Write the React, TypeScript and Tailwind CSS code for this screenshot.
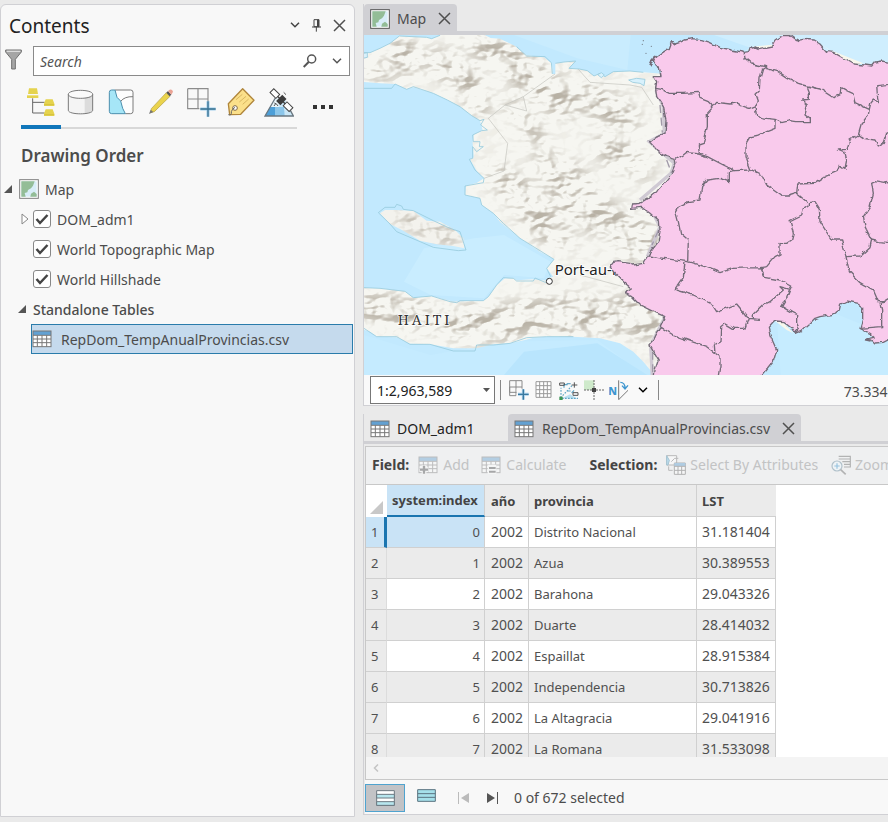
import React, { useState } from "react";

type Row = { index: number; year: number; province: string; lst: string };

const rows: Row[] = [
  { index: 0, year: 2002, province: "Distrito Nacional", lst: "31.181404" },
  { index: 1, year: 2002, province: "Azua", lst: "30.389553" },
  { index: 2, year: 2002, province: "Barahona", lst: "29.043326" },
  { index: 3, year: 2002, province: "Duarte", lst: "28.414032" },
  { index: 4, year: 2002, province: "Espaillat", lst: "28.915384" },
  { index: 5, year: 2002, province: "Independencia", lst: "30.713826" },
  { index: 6, year: 2002, province: "La Altagracia", lst: "29.041916" },
  { index: 7, year: 2002, province: "La Romana", lst: "31.533098" },
];

/* ---------- icons ---------- */

const Chevron = ({ className = "" }: { className?: string }) => (
  <svg viewBox="0 0 10 6" className={`w-[10px] h-[6px] ${className}`} fill="none" stroke="currentColor" strokeWidth="1.5">
    <path d="M1 0.8 5 4.8 9 0.8" />
  </svg>
);

const CloseX = () => (
  <svg viewBox="0 0 13 13" className="size-[13px]" fill="none" stroke="#505050" strokeWidth="1.5">
    <path d="M1 1 12 12M12 1 1 12" />
  </svg>
);

const MapIcon = ({ dark = false }: { dark?: boolean }) => (
  <svg viewBox="0 0 60 60" className="size-5 shrink-0">
    <rect x="2" y="2" width="56" height="56" fill="#fff" stroke={dark ? "#555" : "#808080"} strokeWidth="3" />
    <rect x="7" y="7" width="46" height="46" fill="#d8edf8" />
    <path d="M7 7H47L42 20 36 28 27 33 25 40 17 42 20 53H7Z" fill="#93bd97" />
    <path d="M34 53 36 44 45 38 53 45V53Z" fill="#93bd97" />
  </svg>
);

const TableIcon = ({ faded, children }: { faded?: boolean; children?: React.ReactNode }) => (
  <svg viewBox="0 0 60 54" className="w-5 h-[18px] shrink-0" opacity={faded ? 0.42 : 1}>
    <rect x="3" y="3" width="54" height="47" fill="#fff" />
    <rect x="3" y="3" width="54" height="12" fill="#63a1d2" />
    <path d="M3 16H57M3 27H57M3 38H57M16 16V50M30 16V50M44 16V50" stroke="#777" strokeWidth="3" />
    <rect x="3" y="3" width="54" height="47" fill="none" stroke="#777" strokeWidth="3" />
    {children}
  </svg>
);

const SearchIcon = () => (
  <svg viewBox="0 0 42 42" className="size-[14px]" fill="none" stroke="#555">
    <circle cx="26" cy="15" r="12" strokeWidth="4.5" />
    <path d="M17 24 2 39" strokeWidth="6" />
  </svg>
);

const contentsTools: { label: string; box: string; art: React.ReactNode }[] = [
  {
    label: "List By Drawing Order",
    box: "78 261 90 90",
    art: (
      <>
        <path d="M98 295V339H134M98 307H134" fill="none" stroke="#666" strokeWidth="3" />
        <g fill="#e5d34e">
          <path d="M87 265H111L114 282H84Z" />
          <path d="M81 286H115V294H81Z" />
          <path d="M137 298H158L163 311V318H132V311Z" />
          <path d="M137 328H158L163 341V348H132V341Z" />
        </g>
        <path d="M132 314H163M132 344H163" stroke="#cdb936" strokeWidth="2" />
      </>
    ),
  },
  {
    label: "List By Data Source",
    box: "198 261 90 90",
    art: (
      <>
        <path d="M205 284V331C205 345 278 345 278 331V284Z" fill="#f4f4f4" />
        <path d="M254 294 278 286V331Q274 339 254 341Z" fill="#dcdcdc" />
        <ellipse cx="241.500" cy="283" rx="36.500" ry="11.500" fill="#fafafa" />
        <path d="M205 283V331C205 345 278 345 278 331V283M205 283C205 299 278 299 278 283S205 267 205 283" fill="none" stroke="#7a7a7a" strokeWidth="3" />
      </>
    ),
  },
  {
    label: "List By Selection",
    box: "318 261 90 90",
    art: (
      <>
        <rect x="328" y="270" width="71" height="71" rx="7" fill="#fdfdfd" />
        <path d="M362 304Q374 289 399 290M345 270H392Q399 270 399 277V334Q399 341 392 341H376" fill="none" stroke="#7a7a7a" strokeWidth="3" />
        <path d="M335 270H345L351 292 362 303 368 325 376 341H335Q328 341 328 334V277Q328 270 335 270Z" fill="#a6e6f7" stroke="#4b8fae" strokeWidth="3" />
      </>
    ),
  },
  {
    label: "List By Editing",
    box: "438 261 90 90",
    art: (
      <>
        <path d="M454 326 499 278 510 289 463 335 452 338Z" fill="#ead34d" stroke="#b09a36" strokeWidth="2" />
        <path d="M499 278 504 273 514 284 509 289Z" fill="#555" />
        <path d="M504 273 509 269Q517 267 519 275L514 284Z" fill="#eaa294" />
        <path d="M452 329 447 342 460 336Z" fill="#777" />
      </>
    ),
  },
  {
    label: "List By Snapping",
    box: "558 261 90 90",
    art: (
      <>
        <path d="M563 266H624V326H563V266M594 266V326M563 297H624" fill="none" stroke="#8c8c8c" strokeWidth="3.500" />
        <path d="M598 304H630V330H598Z" fill="#f8f8f8" />
        <path d="M624 304V350M601 327H647" stroke="#9fcdeb" strokeWidth="9" />
        <path d="M624 304V350M601 327H647" stroke="#39708f" strokeWidth="4" />
      </>
    ),
  },
  {
    label: "List By Labeling",
    box: "678 261 90 90",
    art: (
      <>
        <path d="M728 266 762 301 722 343 689 344 685 311Z" fill="#fbe08a" stroke="#b0863c" strokeWidth="4" strokeLinejoin="round" />
        <circle cx="705" cy="324" r="7" fill="#fff" stroke="#806a4a" strokeWidth="3" />
        <path d="M685 344Q696 348 694 335 696 327 705 322" fill="none" stroke="#666" strokeWidth="3" />
        <path d="M708 299 727 283M718 306 738 289M728 313 746 297" stroke="#d3ae58" strokeWidth="2.500" />
      </>
    ),
  },
  {
    label: "List By Perspective Imagery",
    box: "798 261 90 90",
    art: (
      <>
        <path d="M832 294H858L886 348H801Z" fill="#cbe7f7" />
        <path d="M817 320H833V348H801Z" fill="#4d9fd8" />
        <path d="M832 294H842V321H817Z" fill="#e9f5fb" />
        <path d="M831 321H858L860 348H831Z" fill="#8cc6ea" />
        <path d="M832 294 801 348H886L877 331" fill="none" stroke="#6a7780" strokeWidth="4" />
        <g transform="rotate(45 850 300)">
          <rect x="810" y="292" width="25" height="16" fill="#fff" stroke="#444" strokeWidth="3" />
          <rect x="866" y="292" width="25" height="16" fill="#fff" stroke="#444" strokeWidth="3" />
          <path d="M835 300H866" stroke="#444" strokeWidth="4" />
          <rect x="841" y="287" width="18" height="26" fill="#3d3d3d" />
        </g>
        <path d="M833 311 828 318M857 277 864 284M829 309Q836 310 840 318" fill="none" stroke="#555" strokeWidth="3" />
      </>
    ),
  },
];

/* ---------- map drawing ---------- */

const haiti =
  "M0 157 30 158 60 145 90 130 118 108 200 112 215 116 240 106 300 95 370 103 392 114 420 116 465 138 500 166 552 172 575 190 579 222 586 222 586 190 612 186 647 183 627 205 658 207 682 212 702 228 720 220 735 230 760 215 810 213 850 217 950 225V1140H886L875 1115 850 1085 820 1055 780 1030 720 1015 640 1010 560 1010 520 1013 495 1020 450 1030 400 1033 350 1045 280 1045 210 1033 150 1031 110 1012 50 1010 30 995 0 985V863L60 865 135 874 160 893 215 888 280 905 330 902 370 902 385 890 410 855 435 835 460 835 470 841 520 838 560 842 568 834 580 830 560 805 582 778 540 755 480 715 420 665 400 640 365 615 360 595 315 585 318 557 350 549 372 535 350 513 330 478 341 472 338 428 341 404 368 390 360 362 335 347 300 320 262 300 220 280 160 262 140 268 105 252 60 250 0 245Z";
const gonave =
  "M60 640 75 630 105 630 160 632 200 662 240 665 285 690 310 715 313 745 280 738 230 733 180 722 130 692 90 672Z";
const shoreline =
  "M0 157 30 158 60 145 90 130 118 108 200 112 215 116 240 106M470 140 500 168 555 170 574 188 577 222M586 190 612 186 647 183 627 205 658 207 682 212 702 228 720 220 735 230 760 215 810 213 850 217M12 265H95L105 252 140 268 160 260 220 280 262 300 300 320 335 347 360 362 372 358 362 375 382 390 365 392 338 405 340 425 360 425 358 440 370 440 350 455 338 440 338 475 328 478 345 510 372 535 370 548 315 558V585L360 595 365 615 400 640 430 670 480 715 582 778 560 805 572 830M12 863 60 865 135 874 160 893 215 888 270 905 290 908 300 902 370 902 385 890 410 855 430 833 460 835 470 843 520 843 525 834 558 848M12 985 50 1010 110 1010 150 1033 210 1033 280 1053H345L350 1035 400 1035 450 1030 500 1013 560 1010 640 1010M55 638 75 622 105 622 110 613 125 618 130 628 160 632 220 662 270 685 300 695 318 750 295 752 220 742 110 695 90 672Z";

const dominican =
  "M90 192 100 178 118 165 132 155 148 145 155 125 165 132 178 128 195 120 215 116 245 119 270 127 300 142 335 150 372 157 385 155 390 140 400 148 420 145 455 138 465 120 485 107 510 107 530 122 550 118 580 120 600 132 620 155 640 157 680 180 700 192 735 195 755 198 765 186 785 183 820 189V1015L804 1020 790 1027 765 1029 755 1020 735 1018 765 1012 750 1000 720 985 728 960 728 920 715 910 680 903 662 912 658 930 640 943 600 950 585 955 570 970 545 992 525 1000 515 985 490 965 465 963 445 985 450 1005 470 1050 460 1085 440 1110 425 1128V1150H100L105 1110 115 1080 100 1055 90 1037 105 1005 120 980 135 950 100 935 60 915 35 890 15 880 37 867 15 850 -5 830 -20 815 -30 800 -20 787 -5 785 30 790 40 795 70 790 75 780 85 765 115 725 120 690 118 665 90 640 65 622 35 625 37 612 60 610 85 595 110 575 130 550 155 520 168 490 165 478 140 470 115 455 88 425 110 408 135 400 138 360 130 320 110 290 107 265 110 245 100 230 120 230 115 205 102 180Z";
const provinceLines = [
  "M107 265 125 268 148 280 190 280 235 277 240 295 265 305 280 320 290 307 330 312 350 308 370 320 385 325 405 317",
  "M372 157 375 175 395 192 425 198 440 200 428 207 420 235 418 270 408 280 415 300 405 317 410 350 440 355 465 358 485 368 510 362 530 365 568 365 568 355 555 345 562 315 545 300 568 298 568 275 562 260",
  "M435 202 470 212 500 232 535 250 562 258 600 267 640 293 660 285 663 262 680 272 698 280 705 308 735 322 748 328 752 310 760 300 775 308 772 285 770 257 810 253",
  "M280 320 262 340 262 380 250 430 235 435 238 460",
  "M168 478 190 465 200 457 235 462 262 470 310 495 345 512 390 510",
  "M465 358 465 382 440 392 415 405 390 410 378 430 378 470 392 508 425 525 440 555 460 570 485 588 505 588 530 580",
  "M560 605 530 580 533 552 585 550 615 530 650 515 658 495 675 505 680 480 675 458 655 450 680 448 690 420 715 405 725 370 745 345 748 328",
  "M715 405 730 415 765 420 775 438 790 430 800 400 810 395",
  "M345 512 325 515 325 545 300 535 262 540 245 560 240 600 205 605 175 620 167 635 175 665 182 700 205 720 203 785",
  "M85 768 130 775 203 785 255 800 300 818 340 805 420 803",
  "M195 787 190 830 163 868 220 885 275 912 290 935 330 920 350 912 365 930 385 955 420 958",
  "M420 803 440 800 465 770 480 762 480 730 500 730 515 720 520 700 510 662 545 645 550 625 565 615 565 608 585 605 598 625 600 665 635 720 665 720 678 770 720 768 750 740 755 720 735 680 730 650 750 620 760 580 755 550 765 545 795 550 810 540",
  "M755 720 775 725 810 728",
  "M678 770 688 815 720 848 760 870 775 905 790 905 810 893M780 908 785 930 785 980 720 985",
  "M420 803 435 832 480 840 515 858 510 868 480 860 490 870 450 905 430 915 400 945 400 957",
  "M510 868 500 895 485 920 515 937 530 945 530 970 538 985 525 1000",
  "M120 980 160 1005 215 1025 260 1040 300 1070 300 1100 295 1130",
  "M385 955 375 985 340 985 315 970 302 980 300 1025 283 1035 285 1060",
].join("");

const ranges: [number, number, number, number, number][] = [
  [50, 215, 50, 25, 20],
  [135, 170, 60, 45, 60],
  [280, 210, 90, 40, 30],
  [420, 160, 120, 42, 25],
  [500, 220, 70, 50, 60],
  [345, 290, 65, 35, 65],
  [570, 280, 110, 50, 30],
  [500, 370, 100, 22, 50],
  [740, 320, 110, 45, 30],
  [480, 580, 130, 40, 38],
  [620, 540, 120, 50, 38],
  [700, 640, 140, 50, 20],
  [790, 470, 100, 40, 30],
  [560, 690, 90, 35, 30],
  [840, 720, 80, 60, 0],
  [640, 950, 240, 55, 0],
  [380, 970, 150, 55, 0],
  [100, 935, 160, 45, 10],
  [840, 950, 80, 60, 30],
  [200, 680, 110, 24, 24],
  [615, 195, 30, 9, -10],
];

function MapView() {
  return (
    <svg viewBox="0 0 1572 1020" preserveAspectRatio="xMinYMin slice" className="block w-full h-[340px]" role="img" aria-label="Map of Haiti and the Dominican Republic">
      <defs>
        <filter id="relief" x="0" y="0" width="100%" height="100%" colorInterpolationFilters="sRGB">
          <feTurbulence type="fractalNoise" baseFrequency="0.013 0.02" numOctaves="3" seed="11" result="n" />
          <feDiffuseLighting in="n" surfaceScale="50" diffuseConstant="1.1" lightingColor="#fffdf8" result="l">
            <feDistantLight azimuth="225" elevation="60" />
          </feDiffuseLighting>
          <feColorMatrix in="l" type="matrix" values="0 0 0 0 0.70  0 0 0 0 0.67  0 0 0 0 0.62  -1.5 0 0 0 1.22" />
        </filter>
        <filter id="soft" x="-50%" y="-50%" width="200%" height="200%">
          <feGaussianBlur stdDeviation="20" />
        </filter>
        <filter id="wiggle" x="-5%" y="-5%" width="110%" height="110%" colorInterpolationFilters="sRGB">
          <feTurbulence type="fractalNoise" baseFrequency="0.045" numOctaves="2" seed="4" />
          <feDisplacementMap in="SourceGraphic" scale="14" xChannelSelector="R" yChannelSelector="G" />
        </filter>
        <clipPath id="land">
          <path d={haiti} />
          <path d={gonave} />
        </clipPath>
        <mask id="mountains" maskUnits="userSpaceOnUse" x="0" y="90" width="960" height="1060">
          <rect y="90" width="960" height="1060" fill="#1c1c1c" />
          <g filter="url(#soft)" fill="#eee">
            {ranges.map(([cx, cy, rx, ry, a], i) => (
              <ellipse key={i} cx={cx} cy={cy} rx={rx} ry={ry} transform={`rotate(${a} ${cx} ${cy})`} />
            ))}
          </g>
        </mask>
      </defs>
      <rect width="1572" height="1020" fill="#c2e9fe" />
      <path d="M1050 0H1572V110L1400 60 1250 70Z" fill="#cfeefe" />
      <path d="M450 0H800L790 105 640 70Z" fill="#c9ecfe" />
      <path d="M180 640 330 610 420 600 560 680 540 730 420 720 360 790 200 780 120 740Z" fill="#c9edff" />
      <path d="M0 900 200 960 420 920 700 915 840 1020H0Z" fill="#c5ebff" />
      <path d="M420 1020 480 950 700 925 850 1020Z" fill="#b9e5fd" />
      <path d="M1240 870 1400 830 1572 900V1020H1250Z" fill="#c6ecff" />
      <g transform="translate(-12 -105)">
        <path d={haiti} fill="#f6f6f1" />
        <path d={gonave} fill="#f3f2ed" />
        <g clipPath="url(#land)">
          <g mask="url(#mountains)">
            <rect y="90" width="960" height="1060" filter="url(#relief)" />
          </g>
        </g>
        <path d={shoreline} fill="none" stroke="#98cbdd" strokeWidth="2.500" strokeLinejoin="round" />
        <path d="M585 222 490 290 500 333 435 315 385 355 443 430 432 513 372 535M435 315 490 290M655 208 690 247 810 255 845 262 880 315M660 825 790 860" fill="none" stroke="#c2c2bd" strokeWidth="2" />
        <path d="M806 240 830 235 855 238 852 257 840 250 818 247ZM12 160 22 158V172L12 174M713 224 724 218 733 225 724 233Z" fill="#d8f1fc" stroke="#98cbdd" strokeWidth="2.500" />
        <circle cx="568" cy="844" r="9" fill="#fff" stroke="#333" strokeWidth="3" />
        <text x="584" y="824" fontSize="45" fill="#222" className="font-['Noto_Sans',sans-serif]" stroke="#fff" strokeWidth="5" paintOrder="stroke">Port-au-Prince</text>
        <text x="113" y="976" fontSize="42" fill="#333" className="font-['Noto_Serif','DejaVu_Serif','Liberation_Serif',serif] tracking-[9px]" stroke="#fff" strokeWidth="4" paintOrder="stroke">HAITI</text>
      </g>
      <g transform="translate(768 -105)">
        <path d="M108 270 130 320 133 400 88 425 163 490 153 520 60 600M90 622 120 680 82 770M135 950 92 1037 97 1130" fill="none" stroke="#cfc9d3" strokeWidth="10" />
        <path d="M120 315 127 398M140 480 155 520M116 690 96 735M98 1055V1130" fill="none" stroke="#a19aa9" strokeWidth="4" strokeDasharray="24 14" />
        <path d="M372 155 400 140 455 134 470 150H380ZM600 130 625 148 730 190 700 198ZM465 962 490 968 520 1000 500 990Z" fill="#f8f7ec" />
        <g filter="url(#wiggle)" stroke="#736b78" strokeWidth="4" strokeLinejoin="round">
          <path d={dominican} fill="#f9caec" />
          <path d={provinceLines} fill="none" />
          <path d="M88 196 94 182M530 118 538 124M400 144 412 150M735 1018 752 1022" strokeWidth="7" />
        </g>
        <g fill="#77808a">
          <circle cx="70" cy="122" r="2" />
          <circle cx="67" cy="133" r="2" />
          <circle cx="94" cy="139" r="2" />
          <circle cx="78" cy="160" r="2" />
        </g>
      </g>
    </svg>
  );
}

/* ---------- panels ---------- */

function Layer({ name, expandable }: { name: string; expandable?: boolean }) {
  const [on, setOn] = useState(true);
  return (
    <li className="flex h-[30px] items-center pl-5">
      <span className="flex w-3">
        {expandable && (
          <svg viewBox="0 0 8 12" className="h-3 w-2" fill="#fff" stroke="#888">
            <path d="M1 1 7 6 1 11Z" />
          </svg>
        )}
      </span>
      <label className="flex items-center gap-[6px]">
        <span className="relative flex size-[18px]">
          <input
            type="checkbox"
            checked={on}
            onChange={() => setOn(!on)}
            className="peer size-[18px] appearance-none rounded-[3px] border border-[#888] bg-white"
          />
          <svg viewBox="0 0 18 18" className="pointer-events-none absolute inset-0 hidden peer-checked:block" fill="none" stroke="#444" strokeWidth="2.500">
            <path d="M3.500 9 7 13 14.500 5" />
          </svg>
        </span>
        <span>{name}</span>
      </label>
    </li>
  );
}

const Expanded = () => (
  <svg viewBox="0 0 8 8" className="size-2" fill="#555">
    <path d="M8 0V8H0Z" />
  </svg>
);

function ContentsPanel() {
  return (
    <aside className="flex w-[355px] shrink-0 flex-col rounded-t-md border border-[#d0d0d4] bg-[#f8f8f8] text-[14px] text-[#4c4c4c]">
      <header className="flex h-10 items-center justify-between pr-2 pl-2">
        <h1 className="pt-[2px] text-[19px] text-[#222]">Contents</h1>
        <div className="flex items-center gap-3 text-[#444]">
          <button aria-label="Options"><Chevron className="block" /></button>
          <button aria-label="Pin">
            <svg viewBox="0 0 27 39" className="h-[13px] w-[9px]" fill="none" stroke="#444" strokeWidth="3">
              <path d="M6 2H21V23H6ZM0 24H27M13 24V38" />
              <path d="M18 2V23" strokeWidth="6" />
            </svg>
          </button>
          <button aria-label="Close"><CloseX /></button>
        </div>
      </header>

      <div className="flex items-start gap-[11px] pr-1 pl-1">
        <button aria-label="Filter" className="pt-1">
          <svg viewBox="0 0 51 63" className="h-[21px] w-[17px]">
            <path d="M2 3H49V9L31 31V60H20V31L2 9Z" fill="#a6a6a6" stroke="#707070" strokeWidth="3" />
            <path d="M5 5H46V9H5Z" fill="#ddd" />
          </svg>
        </button>
        <div className="mt-px flex h-[30px] min-w-0 flex-1 items-center border border-[#8a8a8a] bg-white pr-[7px] pl-[6px]">
          <input aria-label="Search" placeholder="Search" className="min-w-0 flex-1 bg-transparent text-[14px] italic outline-none placeholder:text-[#555]" />
          <button aria-label="Run search" className="mr-[15px]"><SearchIcon /></button>
          <button aria-label="Search options" className="text-[#555]"><Chevron className="block" /></button>
        </div>
      </div>

      <div className="mt-[11px] flex pl-5">
        <div className="flex border-b-2 border-[#d8d8d8]">
          {contentsTools.map((t, i) => (
            <button
              key={t.label}
              aria-label={t.label}
              className={`-mb-[2px] flex h-[42px] justify-center border-b-4 ${i === 6 ? "w-[36px]" : "w-10"} ${i === 0 ? "border-[#1177bb]" : "border-transparent"}`}
            >
              <svg viewBox={t.box} className="size-[30px] shrink-0">{t.art}</svg>
            </button>
          ))}
        </div>
        <button aria-label="More" className="ml-4 flex h-9 items-center gap-1 pt-1">
          <span className="size-1 bg-[#333]" />
          <span className="size-1 bg-[#333]" />
          <span className="size-1 bg-[#333]" />
        </button>
      </div>

      <h2 className="mt-[13px] pl-5 text-[17px] leading-7 font-semibold">Drawing Order</h2>
      <ul className="mt-1">
        <li className="flex h-[30px] items-center pl-[3px]">
          <Expanded />
          <span className="ml-[7px]"><MapIcon /></span>
          <span className="ml-[6px]">Map</span>
        </li>
        <Layer name="DOM_adm1" expandable />
        <Layer name="World Topographic Map" />
        <Layer name="World Hillshade" />
        <li className="flex h-[30px] items-center gap-[7px] pl-[17px] font-medium"><Expanded />Standalone Tables</li>
        <li className="mr-px ml-[30px] flex h-[30px] items-center gap-[9px] border border-[#2a7cab] bg-[#c5daed]">
          <TableIcon />
          RepDom_TempAnualProvincias.csv
        </li>
      </ul>
    </aside>
  );
}

function StatusBar() {
  return (
    <div className="flex h-[30px] items-center bg-[#f9f9f9] pl-[6px]">
      <span className="relative flex">
        <select aria-label="Map scale" className="h-7 w-[125px] appearance-none border border-[#777] bg-white pl-[6px] text-[14px] text-[#222]">
          <option>1:2,963,589</option>
        </select>
        <svg viewBox="0 0 7 4" className="pointer-events-none absolute top-3 right-[5px] h-1 w-[7px]" fill="#555"><path d="M0 0H7L3.500 4Z" /></svg>
      </span>
      <span className="ml-[5px] h-5 w-px bg-[#888]" />
      <div className="ml-2 flex items-center gap-[5px]">
        <button aria-label="Constraints">
          <svg viewBox="447 27 60 60" className="size-5" fill="none">
            <path d="M449 29H486V64H449ZM468 29V74H449V48H486" stroke="#8a8a8a" strokeWidth="3" />
            <path d="M470 53H488V76H470Z" fill="#f9f9f9" />
            <path d="M490 55V86M474 70H506" stroke="#a8d0ea" strokeWidth="9" />
            <path d="M490 55V86M474 70H506" stroke="#39789f" strokeWidth="4" />
          </svg>
        </button>
        <button aria-label="Grid">
          <svg viewBox="522 27 60 60" className="size-5">
            <path d="M528 32H573V79H528ZM528 44H573M528 56H573M528 68H573M539 32V79M551 32V79M562 32V79" fill="#fff" stroke="#999" strokeWidth="3" />
          </svg>
        </button>
        <button aria-label="Inference">
          <svg viewBox="597 27 60 60" className="size-5" fill="none" strokeWidth="3.500">
            <path d="M606 82 630 70 640 76 654 84Z" fill="#b9e0f2" />
            <path d="M603 80V50M606 82H654M608 74 636 44" stroke="#5da4c5" strokeDasharray="5 4" />
            <path d="M612 50V41H623M642 58 635 66M622 60H632" stroke="#5da4c5" />
            <path d="M599 36H613V43H599ZM639 65H654V73H639ZM643 34V50M635 42H652" stroke="#555" strokeWidth="3" />
            <path d="M620 38H632" stroke="#5da4c5" />
            <rect x="598" y="77" width="10" height="10" fill="#3d9455" />
          </svg>
        </button>
        <button aria-label="Snapping">
          <svg viewBox="672 27 60 60" className="size-5">
            <path d="M672 28H702V57H672Z" fill="#cfeacb" />
            <path d="M672 57H732M702 27V87" stroke="#666" strokeWidth="3" strokeDasharray="6 3" />
            <rect x="696" y="51" width="12" height="12" fill="#444" />
          </svg>
        </button>
        <button aria-label="Correction">
          <svg viewBox="747 27 60 60" className="size-5">
            <text x="745" y="73" fontSize="32" fontWeight="800" fill="#3f97d0" className="font-['Noto_Sans',sans-serif]">N</text>
            <path d="M776 28V86L804 58" fill="none" stroke="#777" strokeWidth="3" />
            <path d="M781 34Q795 34 795 52M786 44 795 54 804 43" fill="none" stroke="#3f97d0" strokeWidth="4" />
          </svg>
        </button>
        <button aria-label="More tools" className="ml-1 text-black"><Chevron className="block" /></button>
      </div>
      <span className="ml-[10px] h-5 w-px bg-[#888]" />
      <span className="ml-[185px] overflow-hidden pt-[2px] text-[14px] whitespace-nowrap text-[#4c4c4c]">73.3349</span>
    </div>
  );
}

function AttributeTable() {
  return (
    <div className="h-[272px] overflow-hidden bg-white">
      <table className="w-[410px] table-fixed border-separate border-spacing-0 text-[13px] leading-5 text-[#505050]">
        <colgroup>
          <col className="w-[21px]" />
          <col className="w-[98px]" />
          <col className="w-[44px]" />
          <col className="w-[168px]" />
          <col className="w-[79px]" />
        </colgroup>
        <thead>
          <tr className="h-8 bg-[#ebebeb] text-left text-[#444]">
            <td className="bg-white">
              <svg viewBox="0 0 13 13" className="mt-3 ml-1 size-[13px]" fill="#c8c8c8"><path d="M13 0V13H0Z" /></svg>
            </td>
            <th className="border-r border-b-2 border-r-[#d0d0d0] border-b-[#1a75b0] bg-[#c9e3f6] pl-[5px]">system:index</th>
            <th className="border-r border-b border-[#d0d0d0] pl-[6px]">año</th>
            <th className="border-r border-b border-[#d0d0d0] pl-[5px]">provincia</th>
            <th className="border-b border-[#d0d0d0] pl-[5px]">LST</th>
          </tr>
        </thead>
        <tbody>
          {rows.map((r, i) => {
            const first = i === 0;
            return (
              <tr key={r.index} className={`h-[31px] ${i % 2 ? "bg-[#ebebeb]" : "bg-white"}`}>
                <th scope="row" className={`border-b border-b-[#d0d0d0] pl-[5px] text-left font-normal ${first ? "border-r-3 border-r-[#1a75b0] bg-[#c9e3f6]" : "border-r border-r-[#dcdcdc] bg-[#ebebeb]"}`}>{i + 1}</th>
                <td className={`border-r border-b border-[#d0d0d0] pr-1 text-right ${first ? "bg-[#c9e3f6]" : ""}`}>{r.index}</td>
                <td className="border-r border-b border-[#d0d0d0] pl-[6px] text-[14px]">{r.year}</td>
                <td className="border-r border-b border-[#d0d0d0] pl-[5px]">{r.province}</td>
                <td className="border-r border-b border-[#d0d0d0] pl-[5px] text-[14px]">{r.lst}</td>
              </tr>
            );
          })}
        </tbody>
      </table>
    </div>
  );
}

export default function App() {
  return (
    <div className="flex min-h-screen gap-2 overflow-hidden bg-[#eaeaea] pt-1 pb-[5px] font-['Noto_Sans',sans-serif] text-[#4c4c4c]">
      <ContentsPanel />
      <main className="min-w-0 flex-1">
        <section className="border-b border-l border-[#d0d0d4]">
          <div className="flex h-[31px] items-stretch border-b-4 border-[#d0d0d4]">
            <div className="flex items-center rounded-t bg-[#d0d0d4] pt-[2px] pr-[6px] pl-[6px]">
              <MapIcon dark />
              <button className="ml-[7px] text-[14px]">Map</button>
              <button aria-label="Close Map" className="ml-3"><CloseX /></button>
            </div>
          </div>
          <MapView />
          <StatusBar />
        </section>

        <section className="mt-2 border-b border-l border-[#d0d0d4]">
          <div className="flex h-[30px] items-stretch border-b-3 border-[#d0d0d4]">
            <button className="flex w-[144px] items-center gap-[7px] pt-[2px] pl-[6px] text-[14px] text-[#222]"><TableIcon />DOM_adm1</button>
            <div className="flex items-center rounded-t bg-[#d0d0d4] pt-[2px] pr-[6px] pl-[6px]">
              <button className="flex items-center gap-2 text-[14px]"><TableIcon />RepDom_TempAnualProvincias.csv</button>
              <button aria-label="Close table" className="ml-3"><CloseX /></button>
            </div>
          </div>

          <div className="pt-[2px] pl-px">
            <div className="flex h-[39px] items-center overflow-hidden border-t border-b border-l border-[#c8c8c8] bg-[#eff0f1] pb-[2px] pl-[6px] text-[14px] whitespace-nowrap">
              <b className="text-[#444]">Field:</b>
              <button disabled className="ml-[9px] flex items-center gap-[5px] text-[#c2c3c4]">
                <TableIcon faded>
                  <path d="M18 28V54M5 41H31" stroke="#fff" strokeWidth="14" />
                  <path d="M18 29V53M6 41H30" stroke="#444" strokeWidth="7" />
                </TableIcon>
                Add
              </button>
              <button disabled className="ml-3 flex items-center gap-[5px] text-[#c2c3c4]">
                <TableIcon faded>
                  <path d="M20 26H46V54H20Z" fill="#fff" />
                  <path d="M24 36H44M24 47H44" stroke="#444" strokeWidth="6" />
                </TableIcon>
                Calculate
              </button>
              <span className="ml-[13px] h-7 w-px bg-[#c4dbe6]" />
              <b className="ml-[10px] text-[#444]">Selection:</b>
              <button disabled className="ml-[9px] flex items-center gap-1 text-[#c2c3c4]">
                <svg viewBox="78 252 60 60" className="size-5 shrink-0" opacity="0.45" fill="none" strokeWidth="3">
                  <path d="M80 254H110V282H80Z" fill="#fff" stroke="#777" />
                  <path d="M80 254 88 268 84 282H80Z" fill="#7cc4e8" stroke="#4b8fae" />
                  <path d="M94 272 104 262H115M86 286V298H98" stroke="#777" />
                  <path d="M103 276H136V310H103Z" fill="#fff" stroke="#666" />
                  <path d="M103 276H136V285H103Z" fill="#63a1d2" />
                  <path d="M103 286H136M103 298H136M114 286V310M125 286V310" stroke="#666" />
                </svg>
                Select By Attributes
              </button>
              <button disabled className="ml-[13px] flex items-center gap-1 text-[#c2c3c4]">
                <svg viewBox="576 250 60 60" className="size-5 shrink-0" opacity="0.5" fill="none" strokeWidth="3.500">
                  <path d="M599 254H634V286H615M599 262H634M610 270H634M615 278H634" stroke="#777" />
                  <circle cx="594" cy="283" r="15" fill="#eef7fc" stroke="#7393a5" />
                  <path d="M594 275V291M586 283H602" stroke="#3f97d0" />
                  <path d="M605 294 620 308" stroke="#777" strokeWidth="5" />
                </svg>
                Zoom To
              </button>
            </div>
            <div className="border-b border-l border-[#c8c8c8]">
              <AttributeTable />
              <div className="flex h-[22px] items-center bg-[#f4f4f4] pl-[7px]">
                <button aria-label="Scroll left">
                  <svg viewBox="0 0 6 8" className="block h-2 w-[6px]" fill="none" stroke="#c4c4c4" strokeWidth="1.500"><path d="M5 0.500 1.500 4 5 7.500" /></svg>
                </button>
              </div>
            </div>
            <footer className="flex h-[34px] items-center bg-[#f8f8f8] pt-px text-[14px]">
              <button aria-label="Show all records" className="flex h-7 w-10 items-center justify-center border border-[#4fa3cf] bg-[#c2c3c6]">
                <svg viewBox="0 0 57 48" className="h-4 w-[19px]" stroke="#6c7880" strokeWidth="3">
                  <path d="M2 2H55V46H2Z" fill="#fff" />
                  <path d="M2 13H55V24H2ZM2 35H55V46H2Z" fill="#b7e6ee" />
                </svg>
              </button>
              <button aria-label="Show selected records" className="ml-3 pb-1">
                <svg viewBox="0 0 57 39" className="h-[13px] w-[19px]" stroke="#5a7480" strokeWidth="3">
                  <path d="M2 2H55V37H2ZM2 14H55M2 25H55" fill="#a5e0ea" />
                </svg>
              </button>
              <button aria-label="First record" className="ml-[22px]">
                <svg viewBox="0 0 12 12" className="block size-3" fill="#bbb"><path d="M0 0H1V12H0ZM11 1V11L3 6Z" /></svg>
              </button>
              <button aria-label="Last record" className="ml-4">
                <svg viewBox="0 0 12 12" className="block size-3" fill="#555"><path d="M11 0H12V12H11ZM1 1V11L9 6Z" /></svg>
              </button>
              <span className="ml-4">0 of 672 selected</span>
            </footer>
          </div>
        </section>
      </main>
    </div>
  );
}
